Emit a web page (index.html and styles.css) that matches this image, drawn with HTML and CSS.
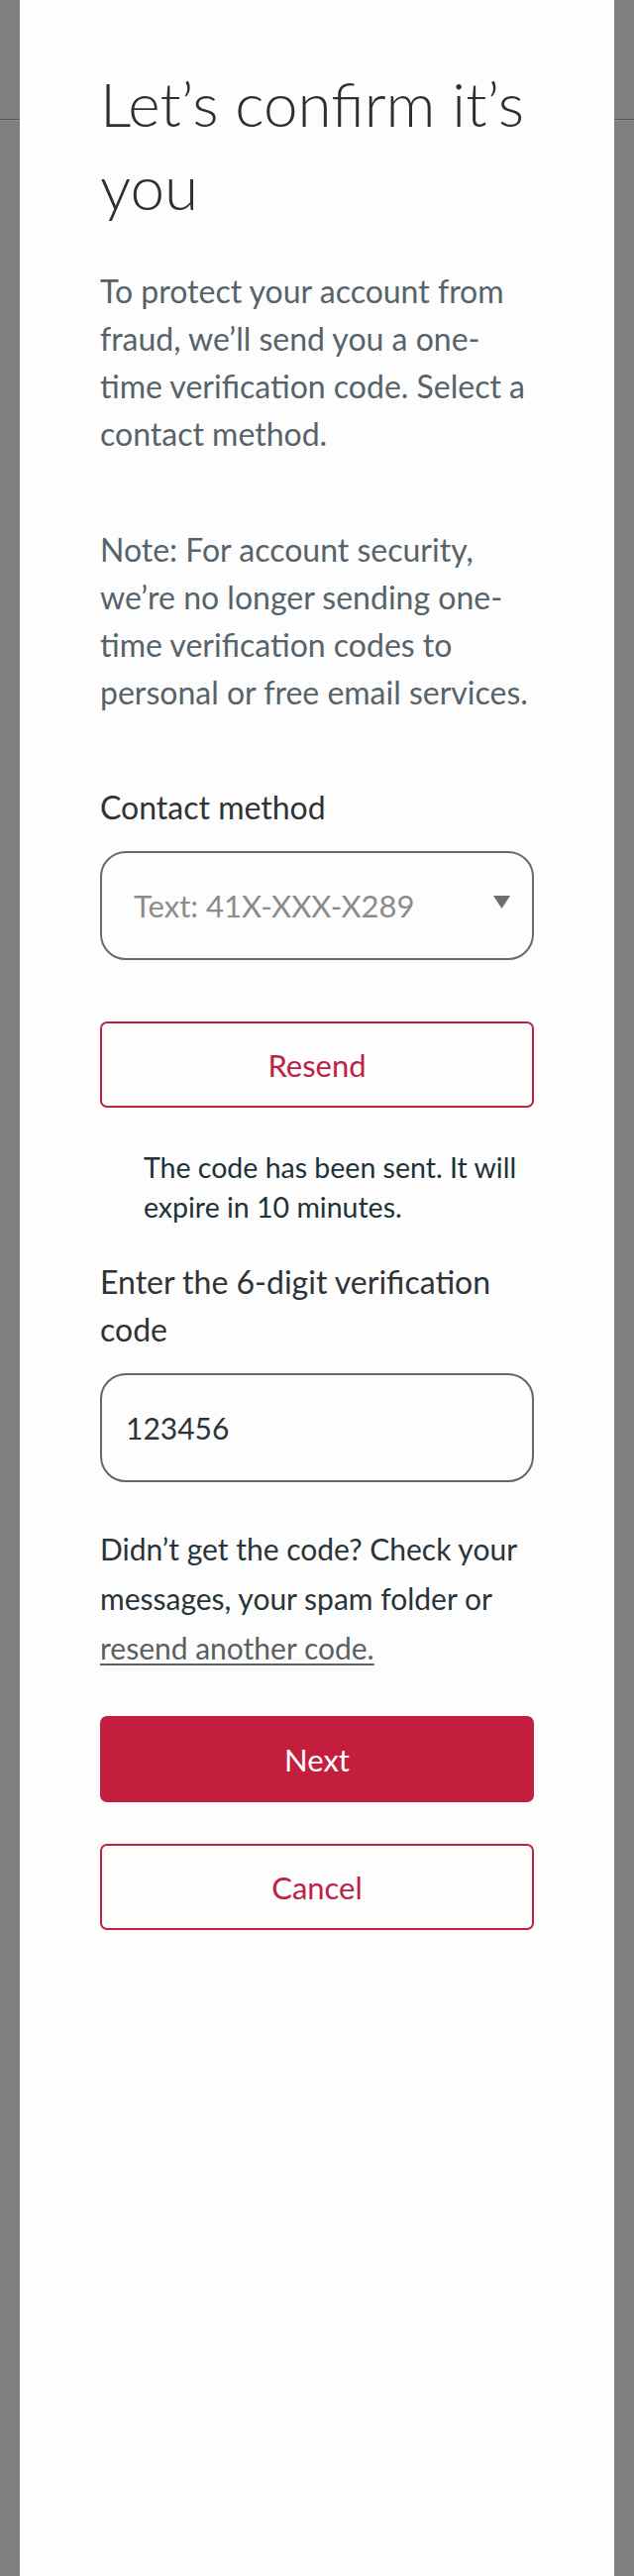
FILE: index.html
```html
<!DOCTYPE html>
<html lang="en">
<head>
<meta charset="utf-8">
<title>Let’s confirm it’s you</title>
<link rel="stylesheet" href="styles.css">
</head>
<body>
<div class="panel">
  <h1 class="title">Let’s confirm it’s you</h1>
  <p class="lead">To protect your account from fraud, we’ll send you a one-time verification code. Select a contact method.</p>
  <p class="lead note">Note: For account security, we’re no longer sending one-time verification codes to personal or free email services.</p>
  <div class="field field-contact">
    <div class="label">Contact method</div>
    <div class="select">
      <span class="select-value">Text: 41X-XXX-X289</span>
      <svg class="caret" width="17" height="13" viewBox="0 0 17 13"><polygon points="0,0 17,0 8.5,13" fill="#6e6e6e"/></svg>
    </div>
  </div>
  <button class="btn btn-outline btn-resend">Resend</button>
  <p class="sent">The code has been sent. It will expire in 10 minutes.</p>
  <div class="field field-code">
    <div class="label">Enter the 6-digit verification code</div>
    <div class="input">123456</div>
  </div>
  <p class="help">Didn’t get the code? Check your messages, your spam folder or <a class="help-link" href="#">resend another code.</a></p>
  <div class="actions">
    <button class="btn btn-primary">Next</button>
    <button class="btn btn-outline">Cancel</button>
  </div>
</div>
</body>
</html>
```

FILE: styles.css
```css
* { box-sizing: border-box; }
html, body { margin: 0; padding: 0; }
body {
  background: linear-gradient(to bottom, #808080 0, #808080 120px, #565656 120px, #565656 121px, #8c8c8c 121px, #8c8c8c 122px, #808080 122px);
  font-family: Lato, "Liberation Sans", Arial, sans-serif;
  min-height: 2600px;
}
.panel {
  margin: 0 20px;
  min-height: 2600px;
  background: #fdfdfd;
  padding: 62px 81px 40px;
  display: flex;
  flex-direction: column;
}
.title {
  margin: 0;
  font-size: 62px;
  line-height: 84px;
  font-weight: 300;
  color: #2c3033;
}
.lead {
  margin: 40px 0 0;
  font-size: 32px;
  line-height: 48px;
  color: #56636a;
  font-weight: 400;
}
.lead.note { margin-top: 69px; }
.field { display: flex; flex-direction: column; gap: 20px; }
.field-contact { margin-top: 68px; }
.label {
  font-size: 32px;
  line-height: 48px;
  color: #2e3336;
}
.select {
  height: 110px;
  border: 2px solid #6a6a6a;
  border-radius: 26px;
  background: #fdfdfd;
  display: flex;
  align-items: center;
  justify-content: space-between;
  padding: 0 22px 0 32px;
}
.select-value {
  font-size: 31px;
  color: #8b8b8b;
}
.caret { display: block; margin-top: -8px; }
.btn {
  width: 100%;
  height: 87px;
  border-radius: 7px;
  font-family: Lato, "Liberation Sans", Arial, sans-serif;
  font-size: 31px;
  cursor: pointer;
}
.btn-outline {
  background: #fdfdfd;
  border: 2px solid #bf2241;
  color: #bb2244;
}
.btn-primary {
  background: #c41e3f;
  border: none;
  color: #ffffff;
}
.btn-resend { margin-top: 62px; }
.sent {
  margin: 40px 0 0;
  padding-left: 44px;
  font-size: 28.5px;
  line-height: 40px;
  color: #1c3238;
}
.field-code { margin-top: 32px; }
.input {
  height: 110px;
  border: 2px solid #666;
  border-radius: 26px;
  background: #fdfdfd;
  display: flex;
  align-items: center;
  padding: 0 24px;
  font-size: 30px;
  color: #2c3438;
}
.help {
  margin: 42px 0 0;
  font-size: 30px;
  line-height: 50px;
  color: #27343a;
}
.help-link {
  color: #5a5f62;
  text-decoration: underline;
  text-underline-offset: 4px;
  text-decoration-thickness: 2px;
}
.actions {
  margin-top: 44px;
  display: flex;
  flex-direction: column;
  gap: 42px;
}
```
